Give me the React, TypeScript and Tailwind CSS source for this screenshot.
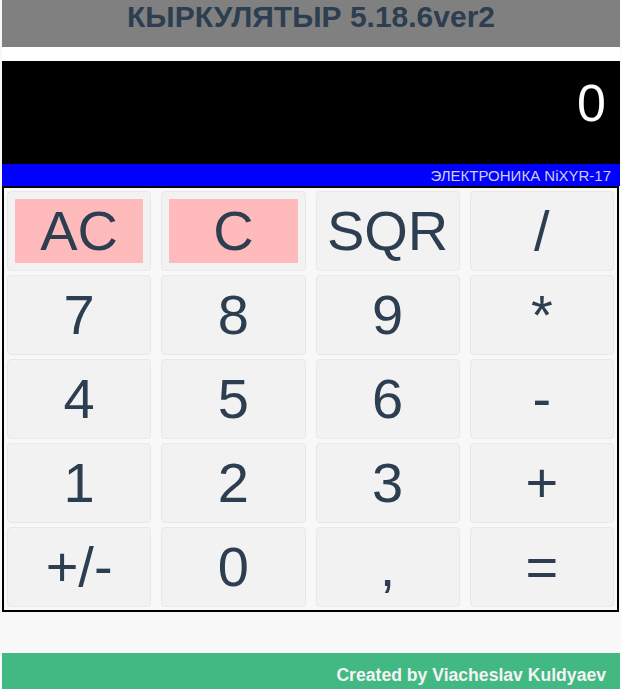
import React from "react";

const keys: { label: string; pink?: boolean }[] = [
  { label: "AC", pink: true },
  { label: "C", pink: true },
  { label: "SQR" },
  { label: "/" },
  { label: "7" },
  { label: "8" },
  { label: "9" },
  { label: "*" },
  { label: "4" },
  { label: "5" },
  { label: "6" },
  { label: "-" },
  { label: "1" },
  { label: "2" },
  { label: "3" },
  { label: "+" },
  { label: "+/-" },
  { label: "0" },
  { label: "," },
  { label: "=" },
];

export default function App() {
  return (
    <div
      className="min-h-[689px] w-[621px] bg-[#f8f8f8] pl-[2px] pr-[1px] overflow-hidden"
      style={{ fontFamily: '"Liberation Sans", Arial, sans-serif' }}
    >
      <div className="h-[47px] bg-[#808080] flex items-center justify-center">
        <h1 className="text-[30px] font-bold text-[#2c3e50] leading-none -mt-[14px]">
          КЫРКУЛЯТЫР 5.18.6ver2
        </h1>
      </div>
      <div className="h-[14px] bg-white" />
      <div className="h-[103px] bg-black flex items-start justify-end pr-[14px] pt-[16px]">
        <span className="text-[52px] text-white leading-none">0</span>
      </div>
      <div className="h-[22px] bg-[#0000ff] flex items-center justify-end pr-[9px]">
        <span className="text-[15px] text-[#d0d0e8] leading-none">ЭЛЕКТРОНИКА NiXYR-17</span>
      </div>
      <div className="border-2 border-black bg-[#f8f8f8] p-[3px] mr-[1px]">
        <div className="grid grid-cols-4 gap-x-[10px] gap-y-[4px]">
          {keys.map((k, i) => (
            <div
              key={i}
              className="h-[80px] bg-[#f2f2f2] border border-[#e8e8e8] rounded-[4px] flex items-stretch justify-stretch p-[7px]"
            >
              <div
                className={
                  "flex-1 flex items-center justify-center text-[56px] text-[#2c3e50] leading-none " +
                  (k.pink ? "bg-[#ffbbbb]" : "")
                }
              >
                {k.label}
              </div>
            </div>
          ))}
        </div>
      </div>
      <div className="h-[41px]" />
      <div className="h-[40px] bg-[#42b983] flex items-start justify-end pr-[14px] pt-[14px]">
        <span className="text-[17.6px] font-bold text-[#f4f4f4] leading-none">
          Created by Viacheslav Kuldyaev
        </span>
      </div>
    </div>
  );
}
